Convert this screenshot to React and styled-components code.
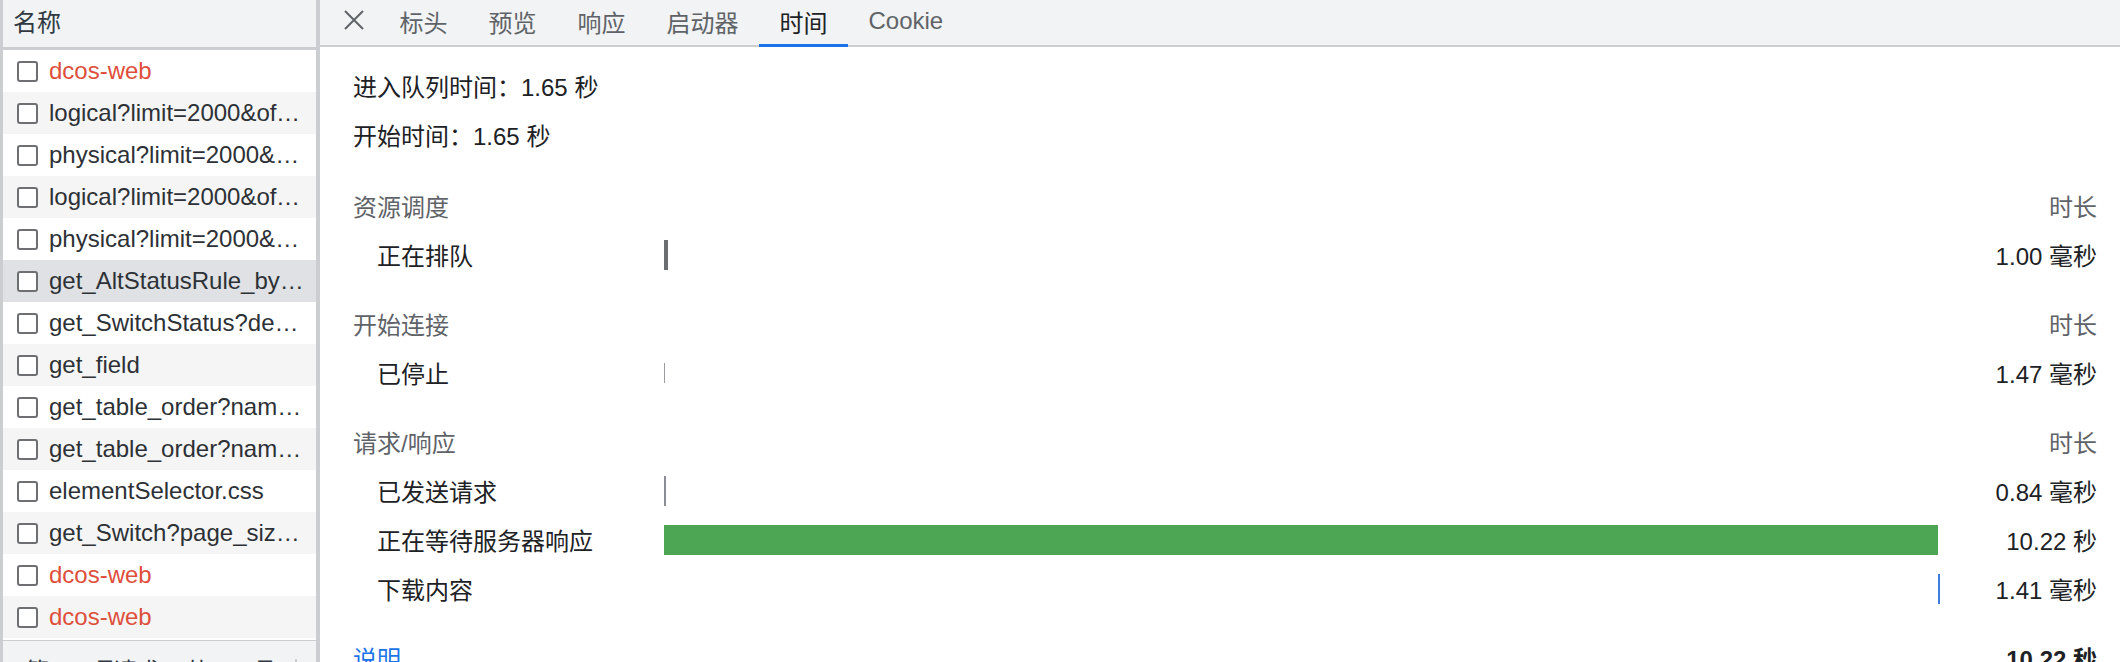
import styled, { createGlobalStyle } from "styled-components";

const requests = [
  { name: "dcos-web", error: true },
  { name: "logical?limit=2000&offset=0" },
  { name: "physical?limit=2000&offset=0" },
  { name: "logical?limit=2000&offset=0" },
  { name: "physical?limit=2000&offset=0" },
  { name: "get_AltStatusRule_by_device", selected: true },
  { name: "get_SwitchStatus?device=1" },
  { name: "get_field" },
  { name: "get_table_order?name=switch" },
  { name: "get_table_order?name=device" },
  { name: "elementSelector.css" },
  { name: "get_Switch?page_size=20" },
  { name: "dcos-web", error: true },
  { name: "dcos-web", error: true },
];

const tabs = ["标头", "预览", "响应", "启动器", "时间", "Cookie"];

const sections = [
  {
    title: "资源调度",
    rows: [{ label: "正在排队", start: 0, width: "4px", kind: "queue", time: "1.00 毫秒" }],
  },
  {
    title: "开始连接",
    rows: [{ label: "已停止", start: 0, width: "1px", kind: "stalled", time: "1.47 毫秒" }],
  },
  {
    title: "请求/响应",
    rows: [
      { label: "已发送请求", start: 0, width: "2px", kind: "sent", time: "0.84 毫秒" },
      { label: "正在等待服务器响应", start: 0, width: "99.84%", kind: "waiting", time: "10.22 秒" },
      { label: "下载内容", start: 99.84, width: "2px", kind: "download", time: "1.41 毫秒" },
    ],
  },
];

const barColors = {
  queue: "#6c6d70",
  stalled: "#9a9b9e",
  sent: "#8a8d91",
  waiting: "#4ca654",
  download: "#3e7ee0",
};

const GlobalStyle = createGlobalStyle`
  html, body {
    margin: 0;
    padding: 0;
    overflow: hidden;
    background: #fff;
  }
  body {
    font-family: "Liberation Sans", "Noto Sans CJK SC", sans-serif;
    font-size: 24px;
    color: #202124;
  }
`;

const App = () => {
  return (
    <>
      <GlobalStyle />
      <Layout>
        <RequestList>
          <ListHeader>名称</ListHeader>
          <Rows>
            {requests.map((req, ind) => (
              <RequestRow key={ind} $odd={ind % 2 === 1} $selected={req.selected}>
                <Checkbox />
                <RequestName $error={req.error}>{req.name}</RequestName>
              </RequestRow>
            ))}
          </Rows>
          <Footer>
            <span>第 17 项请求，共 28 项</span>
            <FooterDivider />
          </Footer>
        </RequestList>
        <Details>
          <TabBar>
            <CloseButton>
              <svg width="20" height="20" viewBox="0 0 20 20">
                <path d="M1 1 L19 19 M19 1 L1 19" stroke="#5f6368" strokeWidth="2" fill="none" />
              </svg>
            </CloseButton>
            {tabs.map((tab) => (
              <Tab key={tab} $active={tab === "时间"}>
                {tab}
              </Tab>
            ))}
          </TabBar>
          <Content>
            <InfoLine>进入队列时间：1.65 秒</InfoLine>
            <InfoLine>开始时间：1.65 秒</InfoLine>
            {sections.map((section) => (
              <Section key={section.title}>
                <SectionHead>
                  <span>{section.title}</span>
                  <span />
                  <Duration $muted>时长</Duration>
                </SectionHead>
                {section.rows.map((row) => (
                  <TimingRow key={row.label}>
                    <RowLabel>{row.label}</RowLabel>
                    <BarTrack>
                      <Bar
                        $kind={row.kind}
                        style={{ marginLeft: `${row.start}%`, width: row.width }}
                      />
                    </BarTrack>
                    <Duration>{row.time}</Duration>
                  </TimingRow>
                ))}
              </Section>
            ))}
            <Summary>
              <ExplainLink>说明</ExplainLink>
              <span />
              <Duration $bold>10.22 秒</Duration>
            </Summary>
          </Content>
        </Details>
      </Layout>
    </>
  );
};
export default App;

const Layout = styled.div`
  display: flex;
  width: 2120px;
  height: 662px;
  overflow: hidden;
`;

const RequestList = styled.div`
  width: 313px;
  flex-shrink: 0;
  display: flex;
  flex-direction: column;
  border-left: 3px solid #cbcdd1;
  border-right: 4px solid #cbcdd1;
`;

const ListHeader = styled.div`
  flex-shrink: 0;
  height: 47px;
  line-height: 45px;
  padding-left: 10px;
  background: #f1f3f4;
  border-bottom: 3px solid #cbcdd1;
  color: #303942;
`;

const Rows = styled.div`
  flex-shrink: 0;
  display: flex;
  flex-direction: column;
`;

const RequestRow = styled.div`
  flex-shrink: 0;
  height: 42px;
  display: flex;
  align-items: center;
  gap: 11px;
  padding: 0 12px 0 14px;
  background: ${(p) => (p.$selected ? "#dfe1e4" : p.$odd ? "#f5f5f5" : "#fff")};
`;

const Checkbox = styled.span`
  width: 17px;
  height: 17px;
  flex-shrink: 0;
  border: 2px solid #6e6f72;
  border-radius: 3px;
  background: #fff;
`;

const RequestName = styled.span`
  flex: 1;
  min-width: 0;
  line-height: 42px;
  white-space: nowrap;
  overflow: hidden;
  text-overflow: ellipsis;
  color: ${(p) => (p.$error ? "#de4f3b" : "#2d3136")};
`;

const Footer = styled.div`
  flex-shrink: 0;
  height: 56px;
  display: flex;
  align-items: center;
  padding-left: 22px;
  margin-top: 2px;
  background: #f1f3f4;
  border-top: 1px solid #cbcdd1;
  color: #303942;
  white-space: nowrap;
`;

const FooterDivider = styled.span`
  width: 2px;
  height: 40px;
  margin-left: 22px;
  margin-top: 20px;
  background: #cbcdd1;
`;

const Details = styled.div`
  flex: 1;
  display: flex;
  flex-direction: column;
  min-width: 0;
`;

const TabBar = styled.div`
  flex-shrink: 0;
  height: 45px;
  display: flex;
  align-items: stretch;
  padding-left: 24px;
  background: #f1f3f4;
  border-bottom: 2px solid #cbcdd1;
`;

const CloseButton = styled.div`
  width: 20px;
  display: flex;
  align-items: center;
  margin-right: 15px;
  padding-bottom: 5px;
`;

const Tab = styled.div`
  padding: 0 20.5px 5px;
  display: flex;
  align-items: center;
  color: ${(p) => (p.$active ? "#202124" : "#5f6368")};
  box-shadow: ${(p) => (p.$active ? "inset 0 -3px 0 #1a73e8" : "none")};
  margin-bottom: -2px;
`;

const Content = styled.div`
  flex-shrink: 0;
  padding: 16px 23px 0 33px;
  display: flex;
  flex-direction: column;
`;

const InfoLine = styled.div`
  line-height: 49px;
  color: #202124;
`;

const Section = styled.div`
  margin-top: 20px;
  display: flex;
  flex-direction: column;
`;

const RowGrid = styled.div`
  display: grid;
  grid-template-columns: 311px 1fr 157px;
  align-items: center;
  height: 49px;
`;

const SectionHead = styled(RowGrid)`
  color: #5f6368;
`;

const TimingRow = styled(RowGrid)``;

const RowLabel = styled.span`
  padding-left: 24px;
  color: #202124;
`;

const BarTrack = styled.div`
  display: flex;
  align-items: center;
  height: 100%;
`;

const Bar = styled.span`
  flex-shrink: 0;
  height: ${(p) => (p.$kind === "stalled" ? "20px" : "30px")};
  background: ${(p) => barColors[p.$kind]};
`;

const Duration = styled.span`
  text-align: right;
  color: ${(p) => (p.$muted ? "#5f6368" : "#202124")};
  font-weight: ${(p) => (p.$bold ? 700 : 400)};
  white-space: nowrap;
`;

const Summary = styled(RowGrid)`
  margin-top: 20px;
`;

const ExplainLink = styled.span`
  color: #1a73e8;
`;
